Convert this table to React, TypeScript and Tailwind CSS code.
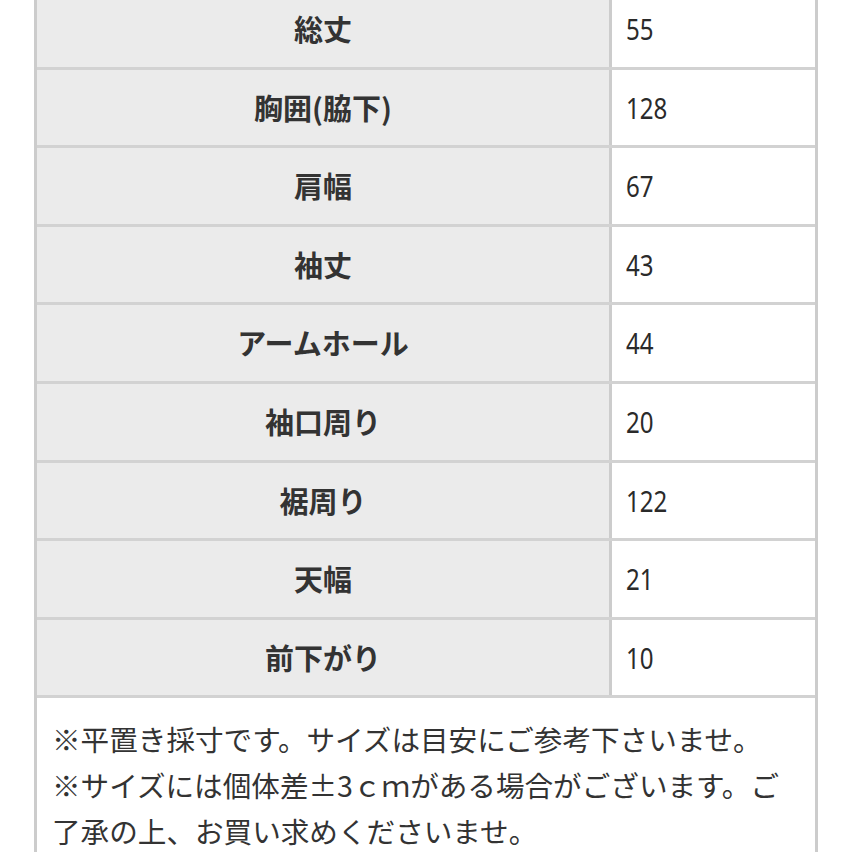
const rows: [string, string][] = [
  ["総丈", "55"],
  ["胸囲(脇下)", "128"],
  ["肩幅", "67"],
  ["袖丈", "43"],
  ["アームホール", "44"],
  ["袖口周り", "20"],
  ["裾周り", "122"],
  ["天幅", "21"],
  ["前下がり", "10"],
];

const jp = "font-['Noto_Sans_CJK_JP','Noto_Sans',sans-serif]";

export default function App() {
  return (
    <div className="h-[852px] w-[852px] overflow-hidden bg-white">
      <div className="ml-[34px] mt-[-9px] w-[784px] border-x-[3px] border-[#cccccc]">
        {rows.map(([label, value]) => (
          <div key={label} className="flex h-[78.6px] border-b-[3px] border-[#d2d2d2]">
            <div
              className={`flex w-[572px] items-center justify-center bg-[#ebebeb] text-[29px] font-bold text-[#333333] ${jp}`}
            >
              {label}
            </div>
            <div className="w-[3px] bg-[#cccccc]" />
            <div className="flex flex-1 items-center pl-[14px] font-['Noto_Sans',sans-serif] text-[29px] text-[#2a2a2a]">
              <span className="inline-block origin-left scale-x-[0.83]">{value}</span>
            </div>
          </div>
        ))}
        <div className={`pl-[15px] pr-[18px] pt-[18px] text-[28.6px] leading-[46px] text-[#333333] ${jp}`}>
          <p>※平置き採寸です。サイズは目安にご参考下さいませ。</p>
          <p>※サイズには個体差±3ｃｍがある場合がございます。ご了承の上、お買い求めくださいませ。</p>
        </div>
      </div>
    </div>
  );
}
